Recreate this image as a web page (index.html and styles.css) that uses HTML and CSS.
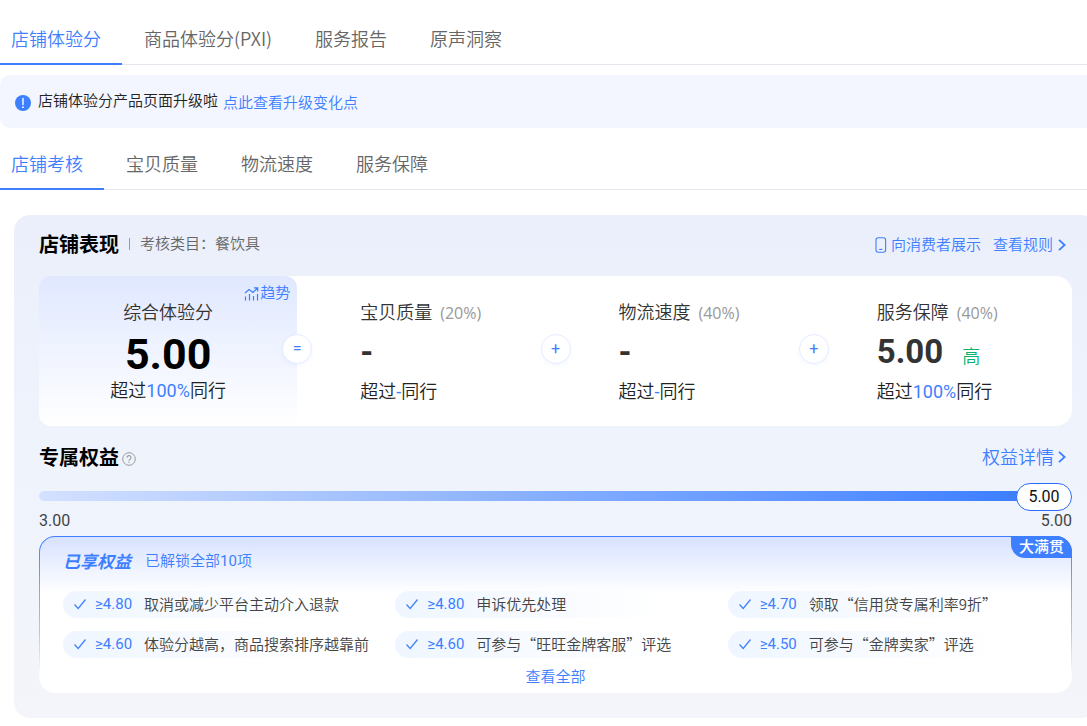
FILE: index.html
```html
<!DOCTYPE html>
<html lang="zh-CN">
<head>
<meta charset="utf-8">
<meta name="viewport" content="width=device-width, initial-scale=1">
<title>店铺体验分</title>
<link rel="stylesheet" href="styles.css">
</head>
<body>
<nav class="tabs tabs-main">
  <a class="tab active" href="#">店铺体验分</a>
  <a class="tab" href="#">商品体验分(PXI)</a>
  <a class="tab" href="#">服务报告</a>
  <a class="tab" href="#">原声洞察</a>
</nav>
<div class="notice">
  <svg class="notice-icon" width="16" height="16" viewBox="0 0 16 16" aria-hidden="true"><circle cx="8" cy="8" r="8" fill="#3d7fff"/><path d="M8 3.5v6" stroke="#fff" stroke-width="1.4" stroke-linecap="round"/><circle cx="8" cy="12.2" r=".9" fill="#fff"/></svg>
  <span class="notice-text">店铺体验分产品页面升级啦</span>
  <a class="notice-link" href="#">点此查看升级变化点</a>
</div>
<nav class="tabs tabs-sub">
  <a class="tab active" href="#">店铺考核</a>
  <a class="tab" href="#">宝贝质量</a>
  <a class="tab" href="#">物流速度</a>
  <a class="tab" href="#">服务保障</a>
</nav>
<main class="panel">
  <header class="panel-head">
    <h2 class="title">店铺表现</h2>
    <span class="category">考核类目：餐饮具</span>
    <div class="links">
      <a class="link" href="#"><svg class="phone" width="12" height="16" viewBox="0 0 12 16" fill="none" stroke="#3d7fff" aria-hidden="true"><rect x="1" y=".8" width="9.6" height="14.4" rx="2.2" stroke-width="1.1"/><path d="M4.2 12.4h3.2" stroke-width="1.1"/></svg><span class="show-label">向消费者展示</span></a>
      <a class="link" href="#">查看规则<svg class="chevron" width="8" height="12" viewBox="0 0 8 12" fill="none" stroke="#3d7fff" stroke-width="1.8" aria-hidden="true"><path d="M1 .8L6.600 6 1 11.200"/></svg></a>
    </div>
  </header>
  <section class="scores">
    <div class="score total">
      <a class="trend" href="#"><svg width="16" height="16" viewBox="0 0 16 16" fill="none" stroke="#3d7fff" stroke-width="1.2" aria-hidden="true"><path d="M1 7L5 3.500l4 3L13.500 2M10 1.800h3.700v3.700M1.500 10.500v4M5.500 8v6.500M9.500 10v4.500M13.500 8v6.500"/></svg>趋势</a>
      <div class="name">综合体验分</div>
      <div class="value">5.00</div>
      <div class="compare">超过<span class="pct">100%</span>同行</div>
      <span class="op">=</span>
    </div>
    <div class="score">
      <div class="name">宝贝质量<span class="weight">(20%)</span></div>
      <div class="value">-</div>
      <div class="compare">超过<span class="pct">-</span>同行</div>
      <span class="op">+</span>
    </div>
    <div class="score">
      <div class="name">物流速度<span class="weight">(40%)</span></div>
      <div class="value">-</div>
      <div class="compare">超过<span class="pct">-</span>同行</div>
      <span class="op">+</span>
    </div>
    <div class="score">
      <div class="name">服务保障<span class="weight">(40%)</span></div>
      <div class="value">5.00<span class="level">高</span></div>
      <div class="compare">超过<span class="pct">100%</span>同行</div>
    </div>
  </section>
  <header class="rights-head">
    <h2 class="title">专属权益</h2>
    <svg class="help" width="14" height="14" viewBox="0 0 14 14" fill="none" stroke="#999" aria-hidden="true"><circle cx="7" cy="7" r="6.300"/><path d="M5 5.700a2 2 0 1 1 2.900 1.700c-.7.4-.9.700-.9 1.400" stroke-width="1.100"/><path d="M7 9.800v1.200" stroke-width="1.100"/></svg>
    <a class="link detail" href="#">权益详情<svg class="chevron" width="8" height="12" viewBox="0 0 8 12" fill="none" stroke="#3d7fff" stroke-width="1.8" aria-hidden="true"><path d="M1 .8L6.600 6 1 11.200"/></svg></a>
  </header>
  <div class="progress"><div class="track"></div><span class="knob">5.00</span></div>
  <div class="range"><span>3.00</span><span>5.00</span></div>
  <section class="rights">
    <span class="badge">大满贯</span>
    <div class="rights-title"><h3 class="owned">已享权益</h3><span class="unlocked">已解锁全部<span class="count">10</span>项</span></div>
    <ul class="list">
      <li class="item"><svg class="check" width="14" height="12" viewBox="0 0 14 12" aria-hidden="true"><path d="M1.500 6.500l3.700 4L12.500 1.500"/></svg><span class="need">≥4.80</span>取消或减少平台主动介入退款</li>
      <li class="item"><svg class="check" width="14" height="12" viewBox="0 0 14 12" aria-hidden="true"><path d="M1.500 6.500l3.700 4L12.500 1.500"/></svg><span class="need">≥4.80</span>申诉优先处理</li>
      <li class="item"><svg class="check" width="14" height="12" viewBox="0 0 14 12" aria-hidden="true"><path d="M1.500 6.500l3.700 4L12.500 1.500"/></svg><span class="need">≥4.70</span>领取“信用贷专属利率9折”</li>
      <li class="item"><svg class="check" width="14" height="12" viewBox="0 0 14 12" aria-hidden="true"><path d="M1.500 6.500l3.700 4L12.500 1.500"/></svg><span class="need">≥4.60</span>体验分越高，商品搜索排序越靠前</li>
      <li class="item"><svg class="check" width="14" height="12" viewBox="0 0 14 12" aria-hidden="true"><path d="M1.500 6.500l3.700 4L12.500 1.500"/></svg><span class="need">≥4.60</span>可参与“旺旺金牌客服”评选</li>
      <li class="item"><svg class="check" width="14" height="12" viewBox="0 0 14 12" aria-hidden="true"><path d="M1.500 6.500l3.700 4L12.500 1.500"/></svg><span class="need">≥4.50</span>可参与“金牌卖家”评选</li>
    </ul>
    <a class="all" href="#">查看全部</a>
  </section>
</main>
</body>
</html>
```
FILE: styles.css
```css
* { box-sizing: border-box; }
body {
  margin: 0;
  padding-top: 15px;
  overflow-x: hidden;
  background: #fff;
  color: #444;
  font-family: "Noto Sans CJK SC", sans-serif;
  font-size: 15px;
  font-weight: 350;
  line-height: 24px;
}
a { color: #3d7fff; text-decoration: none; }
h2, h3, ul { margin: 0; padding: 0; }

.tabs { display: flex; border-bottom: 1px solid #e5e6ed; font-size: 18px; }
.tab {
  padding: 0 21px 0 22px;
  margin-bottom: -1px;
  height: 50px;
  line-height: 47px;
  color: #666;
  border-bottom: 2px solid transparent;
  white-space: nowrap;
}
.tab:first-child { padding-left: 11px; }
.tab.active { color: #3d7fff; border-color: #3d7fff; }

.notice {
  display: flex;
  align-items: center;
  margin-top: 10px;
  height: 53px;
  padding-left: 15px;
  border-radius: 10px 0 0 10px;
  background: #f3f6ff;
  color: #222;
}
.notice-icon { margin: 2px 7px 0 0; }
.notice-text { margin-bottom: 4px; }
.notice-link { margin-left: 5px; }
.tabs-sub { margin-top: 12px; }

.panel {
  margin: 25px -10px 8px 14px;
  padding: 16px 25px 25px;
  border-radius: 16px;
  background: linear-gradient(#ebeffb, #eef3fc 45%, #f4f5fa);
}
.panel-head, .rights-head { display: flex; align-items: center; }
.panel-head { height: 26px; }
.title { font-size: 20px; line-height: 26px; font-weight: 700; color: #000; }
.category { margin: 0 0 2px 10px; padding-left: 11px; color: #666; position: relative; }
.category::before { content: ""; position: absolute; left: 0; top: 7px; height: 12px; border-left: 1px solid #999; }
.links { display: flex; gap: 12px; margin-left: auto; padding-right: 6px; }
.link { display: flex; align-items: center; }
.phone { margin-top: 2px; }
.show-label { margin-left: 4px; }
.chevron { margin: 1px 0 0 5px; }

.scores {
  display: grid;
  grid-template-columns: repeat(4, 1fr);
  margin-top: 19px;
  border-radius: 16px;
  background: #fff;
}
.score { position: relative; height: 150px; padding: 22px 0 0 63px; }
.total {
  padding-left: 0;
  text-align: center;
  border-radius: 12px 12px 0 12px;
  background: linear-gradient(#e0e8ff, #fff);
}
.name { color: #333; font-size: 18px; line-height: 26px; }
.weight { margin-left: 8px; color: #999; font: 16px/24px "Open Sans", sans-serif; }
.value { height: 52px; color: #333; font: 700 33px/54px Roboto, sans-serif; }
.total .value { font-size: 43px; line-height: 60px; color: #000; }
.level { margin-left: 19px; color: #0db26a; font: 350 18px/26px "Noto Sans CJK SC", sans-serif; }
.compare { font-size: 18px; line-height: 26px; color: #222; }
.pct { color: #3d7fff; font-family: Roboto, sans-serif; font-weight: 400; }
.trend { position: absolute; top: 4px; right: 7px; display: flex; align-items: center; }
.trend svg { margin-top: 4px; }
.op {
  position: absolute;
  top: 58px;
  right: -15px;
  z-index: 1;
  width: 30px;
  height: 30px;
  border: 1px solid #e3ecff;
  border-radius: 50%;
  background: #fff;
  box-shadow: 0 2px 4px #3d7fff0d;
  color: #3d7fff;
  font: 400 16px/28px Roboto, sans-serif;
  text-align: center;
}

.rights-head { height: 26px; margin-top: 18px; }
.help { margin: 4px 0 0 3px; }
.detail { margin: 0 0 2px auto; padding-right: 6px; font-size: 18px; line-height: 26px; }
.detail .chevron { margin: 2px 0 0 4px; }
.progress { display: flex; align-items: center; margin-top: 13px; color: #111; font: 18px/26px Roboto, sans-serif; }
.track { flex: 1; height: 10px; margin: 0 -2px 2px 0; border-radius: 5px 0 0 5px; background: linear-gradient(90deg, #d4e1ff, #3d7fff); }
.knob { width: 56px; border: 1px solid #2d6cf6; border-radius: 14px; background: #fff; text-align: center; font-size: 16px; }
.range { display: flex; justify-content: space-between; font: 16px/20px Roboto, sans-serif; color: #444; }

.rights {
  position: relative;
  margin-top: 5px;
  padding: 11px 23px 4px;
  border: 1px solid transparent;
  border-radius: 16px;
  background: linear-gradient(#d8e2ff, #fff 56px) padding-box, linear-gradient(#3d7fff, #a9c6ff 60%, #fff 90%) border-box;
}
.badge {
  position: absolute;
  top: -1px;
  right: -1px;
  padding: 0 8px 2px;
  border-radius: 0 16px 0 14px;
  background: #3d7fff;
  color: #fff;
  font-weight: 500;
  line-height: 20px;
}
.rights-title { display: flex; align-items: center; gap: 14px; color: #3d7fff; }
.owned { font-size: 17px; line-height: 22px; font-style: italic; font-weight: 700; }
.count { font-family: Roboto, sans-serif; font-weight: 400; }
.list { display: grid; grid-template-columns: repeat(3, 1fr); gap: 13px 12px; margin-top: 18px; list-style: none; }
.item {
  display: flex;
  align-items: center;
  height: 27px;
  padding: 0 0 1px 10px;
  border-radius: 14px;
  background: linear-gradient(90deg, #eff6ff, #fff 85%);
  white-space: nowrap;
}
.check { fill: none; stroke: #3d7fff; stroke-width: 1.2; }
.need { width: 49px; margin-left: 8px; color: #3d7fff; font-family: Roboto, sans-serif; font-weight: 400; }
.all { display: block; width: 60px; margin: 6px auto 0; }
```
